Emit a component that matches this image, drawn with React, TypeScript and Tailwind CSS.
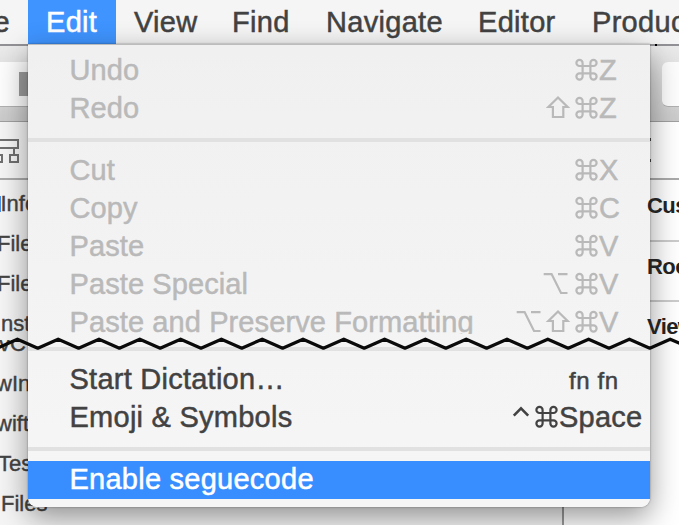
import type { ReactNode } from 'react'

const menuBar = [
  { label: 'View', box: 'w-[98px]' },
  { label: 'Find', box: 'w-[94px]' },
  { label: 'Navigate', box: 'w-[152px]' },
  { label: 'Editor', box: 'w-[114px]' },
  { label: 'Product', box: 'w-[140px]' },
]

type KeyName = 'Command' | 'Shift' | 'Option' | 'Control'

const keyPaths: Record<KeyName, string> = {
  Command:
    'M10.6 14H7.5a3.1 3.1 0 1 1 3.1-3.1V24.5a3.1 3.1 0 1 1-3.1-3.1H21.5a3.1 3.1 0 1 1-3.1 3.1V10.9a3.1 3.1 0 1 1 3.1 3.1H10.6',
  Shift: 'M14 7.5L23.6 17H19.3V27H8.9V17H4.4Z',
  Option: 'M-0.3 8.1H7.6L17 27H23.5M14 8.1H23.5',
  Control: 'M9.8 16.6L17 9.4L24.2 16.6',
}

function Key({ name }: { name: KeyName }) {
  return (
    <svg
      className="h-[36px] w-[27.5px] shrink-0 overflow-visible"
      viewBox="0 0 27.5 36"
      fill="none"
      stroke="currentColor"
      strokeWidth={name === 'Control' ? 2.6 : 2.2}
      role="img"
      aria-label={name}
    >
      <path d={keyPaths[name]} />
    </svg>
  )
}

function Item({ label, keys = [], tail = '', enabled = false, selected = false }: {
  label: string
  keys?: KeyName[]
  tail?: ReactNode
  enabled?: boolean
  selected?: boolean
}) {
  const color = selected ? 'bg-[#388eff] text-white' : enabled ? 'text-[#424242]' : 'text-[#b9b9b9]'
  return (
    <div className={`flex h-[38px] shrink-0 items-start justify-between pl-[41.5px] leading-[36px] whitespace-nowrap ${color}`}>
      <span>{label}</span>
      <span className="flex">
        {keys.map((k) => <Key key={k} name={k} />)}
        {tail}
      </span>
    </div>
  )
}

function Letter({ children }: { children: string }) {
  return <span className="w-[51px]">{children}</span>
}

function Separator() {
  return <div className="my-[10px] h-1 shrink-0 bg-[#e1e1e1]" />
}

function Zigzag() {
  const points = Array.from({ length: 36 }, (_, i) => `${(-23.4 + i * 20.4).toFixed(1)},${i % 2 ? 13.2 : 4.2}`).join(' ')
  return (
    <svg className="absolute top-[335px] left-0" width="679" height="18" fill="none">
      <polyline points={points} stroke="#0a0a0a" strokeWidth="3.2" strokeLinejoin="round" />
    </svg>
  )
}

function TreeIcon() {
  return (
    <svg width="20" height="26" viewBox="0 0 20 26" fill="none" stroke="#707070" strokeWidth="2">
      <path d="M-2 2H18V10H-2M14 10V17M10 17H18V24H10ZM-6 17H2V24H-6" />
    </svg>
  )
}

export default function App() {
  return (
    <div className="relative flex h-[525px] w-[679px] flex-col overflow-hidden bg-white font-['Liberation_Sans',Arial,sans-serif]">
      <div className="flex h-[44px] shrink-0 bg-[#f5f5f5] text-[29px] leading-[44px] tracking-[0.3px] text-[#424242] [-webkit-text-stroke:0.5px]">
        <div className="flex w-[28px] shrink-0 justify-end pr-[18px]">File</div>
        <div className="w-[88px] shrink-0 bg-[#3f94ff] pl-[18px] text-white">Edit</div>
        {menuBar.map((m) => <div key={m.label} className={`shrink-0 pl-[18px] ${m.box}`}>{m.label}</div>)}
      </div>

      <div className="flex h-[78px] shrink-0 items-center justify-between border-t-2 border-b border-t-[#929296] border-b-[#a0a0a0] bg-linear-to-b from-[#ebebeb] to-[#cbcbcb]">
        <div className="mt-[1px] flex h-[45px] w-[60px] items-center border-b border-[#b0b0b0] bg-[#fdfdfd] pl-[19px]">
          <div className="h-6 w-6 bg-[#9b9b9b]" />
        </div>
        <div className="mt-[1px] h-[45px] w-[17px] rounded-l-md border-b border-[#b0b0b0] bg-[#fdfdfd]" />
      </div>

      <div className="flex min-h-0 flex-1">
        <div className="flex w-[562px] shrink-0 flex-col bg-[#f5f5f5] text-[22px] text-[#444] [-webkit-text-stroke:0.4px]">
          <div className="h-[58px] shrink-0 border-b-2 border-[#aaa] pt-4"><TreeIcon /></div>
          <div className="flex h-[160px] shrink-0 flex-col overflow-hidden pt-[4px] leading-[40px]">
            <div className="flex h-10 shrink-0"><span className="my-[12px] w-[1px] bg-[#4a90e2]" /><span className="-ml-[0.5px]">Info</span></div>
            <div className="-ml-[3px] h-10 shrink-0">Files</div>
            <div className="-ml-[3px] h-10 shrink-0">Files</div>
            <div className="-ml-[5px] h-10 shrink-0">Inst</div>
          </div>
          <div className="flex h-[185px] shrink-0 flex-col justify-end overflow-hidden pb-[1px] leading-[40px]">
            <div className="-ml-[1px] h-10 shrink-0">vC</div>
            <div className="-ml-[4px] h-10 shrink-0">wIn</div>
            <div className="-ml-[4px] h-10 shrink-0">wift</div>
            <div className="-ml-[2px] h-10 shrink-0">Tests</div>
            <div className="ml-[1px] h-10 shrink-0">Files</div>
          </div>
        </div>
        <div className="flex min-w-0 flex-1 flex-col border-l-2 border-[#999] bg-white pl-[86px]">
          <div className="h-[58px] shrink-0 border-b-2 border-[#aaa]" />
          <div className="h-[62px] shrink-0 border-b-2 border-[#ccc]" />
          <div className="h-[60px] shrink-0 border-b-2 border-[#ccc]" />
        </div>
      </div>

      <div className="absolute top-[44px] left-[28px] flex h-[463px] w-[622px] flex-col overflow-visible rounded-b-[9px] border-t border-[#bcbcbc] bg-linear-to-b from-[#f0f0f0] to-[#f6f6f6] pt-[7px] text-[29px] tracking-[0.1px] shadow-[0_10px_30px_rgba(0,0,0,0.42),0_0_2px_rgba(0,0,0,0.45)] [-webkit-text-stroke:0.5px]">
        <div className="flex h-[282px] shrink-0 flex-col overflow-hidden">
          <Item label="Undo" keys={['Command']} tail={<Letter>Z</Letter>} />
          <Item label="Redo" keys={['Shift', 'Command']} tail={<Letter>Z</Letter>} />
          <Separator />
          <Item label="Cut" keys={['Command']} tail={<Letter>X</Letter>} />
          <Item label="Copy" keys={['Command']} tail={<Letter>C</Letter>} />
          <Item label="Paste" keys={['Command']} tail={<Letter>V</Letter>} />
          <Item label="Paste Special" keys={['Option', 'Command']} tail={<Letter>V</Letter>} />
          <Item label="Paste and Preserve Formatting" keys={['Option', 'Shift', 'Command']} tail={<Letter>V</Letter>} />
        </div>
        <div className="mt-[13px] mb-[10px] h-1 shrink-0 bg-[#e1e1e1]" />
        <div className="flex shrink-0 flex-col tracking-[0.25px]">
          <Item label="Start Dictation…" tail={<span className="w-[81px] pt-[2px] text-[24px] tracking-[0.6px]">fn fn</span>} enabled />
          <Item label="Emoji & Symbols" keys={['Control', 'Command']} tail={<span className="w-[91px]">Space</span>} enabled />
          <Separator />
          <Item label="Enable seguecode" selected />
        </div>
      </div>

      <div className="absolute top-[186px] left-[647px] text-[22px] leading-[40px] font-bold tracking-[-0.6px] text-[#222]">
        <div className="h-[60.5px]">Cus</div>
        <div className="h-[60.5px]">Roo</div>
        <div>View</div>
      </div>
      <div className="absolute top-[138px] left-[650px] flex h-[24px] w-[1px] flex-col justify-between">
        <span className="h-[3px] bg-[#333]" />
        <span className="h-[3px] bg-[#333]" />
      </div>
      <div className="absolute top-[44px] left-[655px] h-[2px] w-[2px] bg-black" />
      <Zigzag />
    </div>
  )
}
